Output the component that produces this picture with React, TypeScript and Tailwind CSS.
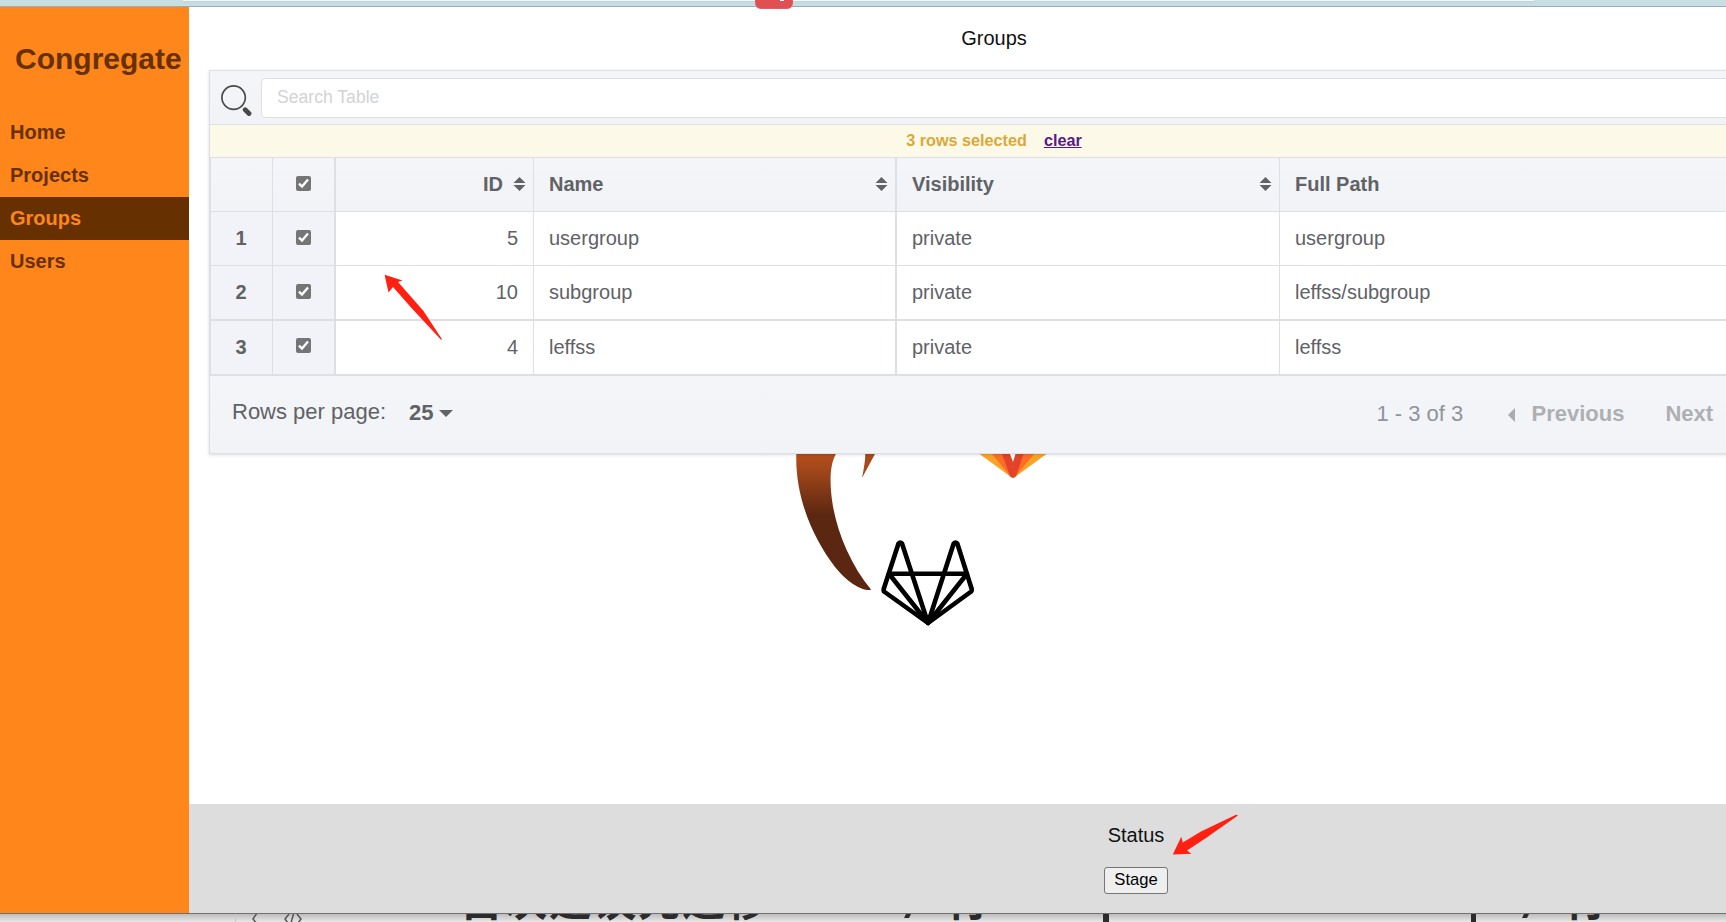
import React from "react";

const groups = [
  { id: 5, name: "usergroup", visibility: "private", path: "usergroup" },
  { id: 10, name: "subgroup", visibility: "private", path: "leffss/subgroup" },
  { id: 4, name: "leffss", visibility: "private", path: "leffss" },
];

const navItems = ["Home", "Projects", "Groups", "Users"];

function CheckBox() {
  return (
    <svg className="block h-[15px] w-[15px]" viewBox="0 0 15 15">
      <rect width="15" height="15" rx="2" fill="#757575" />
      <path d="M3 7.7 L6 10.6 L12 3.4" fill="none" stroke="#fff" strokeWidth="2.3" />
    </svg>
  );
}

function SortIcon() {
  return (
    <svg className="block h-[14px] w-[13px] shrink-0" viewBox="0 0 13 14">
      <path d="M0.5 6 L6.5 0 L12.5 6 Z M0.5 8 L6.5 14 L12.5 8 Z" fill="#606266" />
    </svg>
  );
}

function HeaderCell({ label, className, iconPad }: { label: string; className: string; iconPad: string }) {
  return (
    <div className={"flex items-center border-[#dcdfe6] pb-[2px] pl-[15px] " + className}>
      <span className="flex-1">{label}</span>
      <span className={iconPad}>
        <SortIcon />
      </span>
    </div>
  );
}

function Logo() {
  return (
    <svg className="absolute top-[447px] left-[601px] h-[200px] w-[270px]" viewBox="790 454 270 200">
      <defs>
        <linearGradient id="tail" gradientUnits="userSpaceOnUse" x1="0" y1="454" x2="0" y2="590">
          <stop offset="0" stopColor="#b34f1e" />
          <stop offset="0.1" stopColor="#a5481b" />
          <stop offset="0.45" stopColor="#5c2711" />
          <stop offset="1" stopColor="#5a2611" />
        </linearGradient>
      </defs>
      <path d="M796.3 454 L836 454 C830 464 829.5 481 832 500 C836 530 850 564 871 589.5 C868 591.5 853 589 835 567 C815 541 795 500 796.3 454 Z" fill="url(#tail)" />
      <path d="M865.3 454 L875 454 L862 478 C864 468 865.3 460 865.3 454 Z" fill="#a94a1c" />
      <path d="M979.5 454 L1046.5 454 L1015 477 Q1013 478.5 1011 477 Z" fill="#fca326" />
      <path d="M992 454 L1034 454 L1015 477 Q1013 478.5 1011 477 Z" fill="#fc6d26" />
      <path d="M1002 454 L1023.5 454 L1016 476 Q1013 479 1010 476 Z" fill="#e24329" />
      <path d="M1010 454 L1015.5 454 L1013 462 Z" fill="#fff" />
      <g fill="none" stroke="#000" strokeWidth="4.6" strokeLinejoin="round" strokeLinecap="round">
        <path d="M928 623 L884 591.5 Q883.4 590.5 883.7 589 L898.5 543.5 Q900.3 541.5 902 543.5 L928 623 L953.7 543.5 Q955.5 541.5 957.3 543.5 L971.7 589 Q972 590.5 971.2 591.5 Z" />
        <path d="M889 573.7 H967 L928 623 Z" />
      </g>
    </svg>
  );
}

function Sidebar() {
  return (
    <aside className="w-[189px] shrink-0 bg-[#ff861a] font-bold text-[#663000]">
      <h1 className="h-[104px] pt-[34px] pl-[15px] text-[30px] leading-[36px]">Congregate</h1>
      <nav>
        {navItems.map((item) => (
          <a
            key={item}
            className={
              "flex h-[43px] items-center pl-[10px] text-[20px] leading-[23px] " +
              (item === "Groups" ? "bg-[#663000] text-[#ff861a]" : "")
            }
          >
            {item}
          </a>
        ))}
      </nav>
    </aside>
  );
}

function GroupTable() {
  return (
    <section className="relative z-10 ml-5 w-[1570px] border border-[#dcdfe6] bg-[#f2f3f8] text-[20px] text-[#606266] shadow-[0_1px_3px_rgba(0,0,0,0.15)]">
      <div className="flex h-[54px] items-start border-b border-[#dcdfe6] bg-linear-to-b from-[#f4f5f8] to-[#f1f3f6] pt-[7px] pr-2">
        <svg className="mt-[7px] ml-[10px] h-[32px] w-[32px]" viewBox="0 0 32 32">
          <circle cx="13.6" cy="12.6" r="11.7" fill="none" stroke="#494949" strokeWidth="1.7" />
          <path d="M25.2 24.7 L29 28.5" stroke="#494949" strokeWidth="4.8" strokeLinecap="round" />
        </svg>
        <div className="ml-[9px] flex h-[40px] flex-1 items-center rounded border border-[#dcdfe6] bg-white pb-[2px] pl-[15px] text-[17.6px] text-[#d3d3d3]">
          Search Table
        </div>
      </div>
      <div className="flex h-[33px] items-center justify-center gap-[17px] border-b border-[#dcdfe6] bg-[#fdf9e8] pb-px text-[16.2px] font-bold">
        <span className="text-[#d8a93a]">3 rows selected</span>
        <a className="text-[#551a8b] underline">clear</a>
      </div>
      <div className="border-l border-[#dcdfe6]">
        <div className="flex h-[54px] border-b border-[#dcdfe6] bg-linear-to-b from-[#f4f5f8] to-[#f1f3f6] font-bold">
          <div className="w-[62px] border-r border-[#dcdfe6]" />
          <div className="flex w-[63px] items-center justify-center border-r-2 border-[#dcdfe6] pb-[2px]">
            <CheckBox />
          </div>
          <div className="flex w-[198px] items-center justify-end gap-[10px] border-r border-[#dcdfe6] pr-[7px] pb-[2px]">
            <span>ID</span>
            <SortIcon />
          </div>
          <HeaderCell label="Name" className="w-[363px] border-r-2" iconPad="pr-[7px]" />
          <HeaderCell label="Visibility" className="w-[383px] border-r" iconPad="pr-[7px]" />
          <HeaderCell label="Full Path" className="flex-1" iconPad="pr-[7px]" />
        </div>
        {groups.map((g, i) => (
          <div
            key={g.id}
            className={
              "flex border-[#dcdfe6] bg-white " + (i === 0 ? "h-[54px] border-b" : "h-[55px] border-b-2")
            }
          >
            <div className="flex w-[62px] items-center justify-center border-r border-[#dcdfe6] bg-[#f2f3f8] pr-px pb-[2px] font-bold">
              {i + 1}
            </div>
            <div
              className={
                "flex w-[63px] items-center justify-center border-r-2 border-[#dcdfe6] bg-[#f2f3f8] " +
                (i === 2 ? "pb-[4px]" : "pb-[2px]")
              }
            >
              <CheckBox />
            </div>
            <div className="flex w-[198px] items-center justify-end border-r border-[#dcdfe6] pr-[15px] pb-[2px]">{g.id}</div>
            <div className="flex w-[363px] items-center border-r-2 border-[#dcdfe6] pb-[2px] pl-[15px]">{g.name}</div>
            <div className="flex w-[383px] items-center border-r border-[#dcdfe6] pb-[2px] pl-[15px]">{g.visibility}</div>
            <div className="flex flex-1 items-center pb-[2px] pl-[15px]">{g.path}</div>
          </div>
        ))}
      </div>
      <div className="flex h-[77px] items-start bg-linear-to-b from-[#f4f5f8] to-[#f1f3f6] text-[22px] leading-[26px]">
        <span className="mt-[23px] ml-[22px] w-[177px]">Rows per page:</span>
        <span className="mt-[24px] font-bold">25</span>
        <svg className="mt-[34px] ml-[6px] h-[7px] w-[14px]" viewBox="0 0 14 7">
          <path d="M0 0 H14 L7 7 Z" fill="#606266" />
        </svg>
        <span className="mt-[25px] ml-[923px] w-[131px] text-[#909399]">1 - 3 of 3</span>
        <svg className="mt-[32px] ml-px h-[14px] w-[7px]" viewBox="0 0 7 14">
          <path d="M7 0 V14 L0 7 Z" fill="#a8abb0" />
        </svg>
        <span className="mt-[25px] ml-[16px] w-[134px] font-bold text-[#adafb3]">Previous</span>
        <span className="mt-[25px] font-bold text-[#adafb3]">Next</span>
      </div>
    </section>
  );
}

export default function App() {
  return (
    <div className="relative flex h-[922px] w-[1726px] flex-col overflow-hidden bg-white font-['Liberation_Sans',Arial,sans-serif]">
      <div className="flex h-[7px] shrink-0 justify-start border-b border-[#98aeb2] bg-[#c7dfe2] pl-[183px]">
        <div className="h-px w-[1351px] bg-[#f3f7f8] shadow-[0_1px_2px_rgba(0,0,0,0.08)]" />
      </div>
      <div className="absolute top-0 left-[755px] z-20 flex h-[9px] w-[38px] justify-center rounded-b-[6px] border border-t-0 border-[#f0595b] bg-[#e04f51] pl-[16px]">
        <div className="h-px w-[4px] bg-white" />
      </div>

      <div className="flex h-[906px] shrink-0">
        <Sidebar />
        <main className="relative flex min-w-0 flex-1 flex-col overflow-hidden">
          <Logo />
          <div className="h-[63px] w-[1610px] shrink-0 pt-[20px] text-center text-[20px] leading-[23px] text-[#111]">
            Groups
          </div>
          <GroupTable />
          <footer className="mt-auto flex h-[109px] shrink-0 flex-col items-start bg-[#ddd] pt-[19px]">
            <div className="ml-[917px] w-[60px] text-center text-[20px] leading-[24px] text-[#111]">Status</div>
            <button className="mt-[20px] ml-[915px] h-[27px] w-[64px] rounded-[3px] border border-[#767676] bg-[#efefef] pb-[2px] text-[16.6px] leading-[22px] text-black">
              Stage
            </button>
          </footer>
        </main>
      </div>

      <div className="h-[9px] shrink-0 overflow-hidden border-t border-[#707070] bg-linear-to-b from-[#bdbdbd] to-[#e8e8e8]">
        <div className="relative h-[8px] font-['Noto_Sans_CJK_SC',sans-serif] text-[43px] leading-[50px] font-bold text-[#2b2b2b]">
          <div className="absolute top-0 left-[235px] h-[8px] w-px bg-[#c9c9c9]" />
          <svg className="absolute top-0 left-[250px] h-[8px] w-[56px]" viewBox="0 0 56 8" fill="none" stroke="#555" strokeWidth="1.5">
            <path d="M7 -1 L3 5 L7 10 M39 0 L35 5 L38 9 M44 -2 L41 9 M47 0 L51 5 L48 9" />
          </svg>
          <span className="absolute top-[-42px] left-[460px] tracking-[1.4px] whitespace-nowrap">首次建议先迁移</span>
          <span className="absolute top-[-42px] left-[946px]">行</span>
          <span className="absolute top-[-42px] left-[1564px]">行</span>
          <svg className="absolute top-0 left-[900px] h-[8px] w-[640px]" viewBox="0 0 640 8" fill="#2b2b2b">
            <path d="M6 0 H11 L9 4 H4 Z M203 0 H209 V8 H203 Z M571 0 H576 V8 H571 Z M624 0 H629 L627 4 H622 Z" />
          </svg>
        </div>
      </div>

      <svg className="absolute top-[270px] left-[380px] z-30 h-[75px] w-[66px]" viewBox="380 270 66 75">
        <path d="M384.6 274.8 L402.5 280.5 L398 282 L423.5 311 L442 339.3 L441 339.7 L411.5 308 L393 287 L388.5 292.5 Z" fill="#ff2012" />
      </svg>
      <svg className="absolute top-[810px] left-[1168px] z-30 h-[50px] w-[75px]" viewBox="1168 810 75 50">
        <path d="M1172.8 854.5 L1181.3 836.8 L1182.8 842.5 L1201 831.5 L1236 814.8 L1238 815.5 L1206 838 L1187 850.5 L1191.5 853.8 Z" fill="#ff2012" />
      </svg>
    </div>
  );
}
